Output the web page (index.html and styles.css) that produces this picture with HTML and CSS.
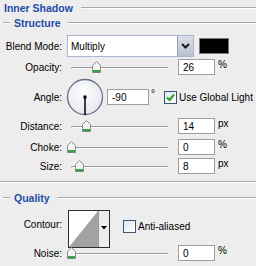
FILE: index.html
```html
<!DOCTYPE html>
<html lang="en">
<head>
  <meta charset="UTF-8" />
  <title>Inner Shadow</title>
  <link rel="stylesheet" href="styles.css">
</head>
<body>
  <div class="panel">
    <div class="panel-title">Inner Shadow</div>
    <div class="group-title">Structure</div>

    <div class="row row-blend">
      <label class="lbl">Blend Mode:</label>
      <div class="select">
        <span class="select-text">Multiply</span>
        <span class="select-btn">
          <svg width="9" height="6" viewBox="0 0 9 6"><path d="M1 1 L4.5 4.5 L8 1" fill="none" stroke="#1b1b1b" stroke-width="2"/></svg>
        </span>
      </div>
      <div class="swatch"></div>
    </div>

    <div class="row row-opacity">
      <label class="lbl">Opacity:</label>
      <div class="slider">
        <span class="thumb" style="left:21px"><svg width="9" height="12" viewBox="0 0 9 12"><path d="M0.5 4.5 L4.5 0.5 L8.5 4.5 V11.5 H0.5 Z" fill="#f2f2f2" stroke="#8c8c8c"/><rect x="1" y="9" width="7" height="2.5" fill="#3a9f4a"/></svg></span>
      </div>
      <input class="num" type="text" value="26">
      <span class="unit">%</span>
    </div>

    <div class="row row-angle">
      <label class="lbl">Angle:</label>
      <svg class="dial" width="38" height="38" viewBox="0 0 38 38">
        <defs>
          <radialGradient id="dialFill" cx="0.45" cy="0.4" r="0.6">
            <stop offset="0" stop-color="#ffffff"/>
            <stop offset="1" stop-color="#e6e8ee"/>
          </radialGradient>
        </defs>
        <circle cx="19" cy="19" r="17.5" fill="url(#dialFill)" stroke="#68708a" stroke-width="1.3"/>
        <line x1="19" y1="19" x2="19" y2="37" stroke="#000" stroke-width="1.5"/>
        <rect x="17.5" y="17.5" width="3" height="3" fill="#000"/>
      </svg>
      <input class="num num-angle" type="text" value="-90">
      <span class="deg">°</span>
      <span class="check check-on">
        <svg width="13" height="13" viewBox="0 0 13 13"><path d="M3 6.5 L5.5 9 L10 3.5" fill="none" stroke="#22a02a" stroke-width="2"/></svg>
      </span>
      <span class="check-text">Use Global Light</span>
    </div>

    <div class="row row-distance">
      <label class="lbl">Distance:</label>
      <div class="slider">
        <span class="thumb" style="left:11px"><svg width="9" height="12" viewBox="0 0 9 12"><path d="M0.5 4.5 L4.5 0.5 L8.5 4.5 V11.5 H0.5 Z" fill="#f2f2f2" stroke="#8c8c8c"/><rect x="1" y="9" width="7" height="2.5" fill="#3a9f4a"/></svg></span>
      </div>
      <input class="num" type="text" value="14">
      <span class="unit">px</span>
    </div>

    <div class="row row-choke">
      <label class="lbl">Choke:</label>
      <div class="slider">
        <span class="thumb" style="left:-4px"><svg width="9" height="12" viewBox="0 0 9 12"><path d="M0.5 4.5 L4.5 0.5 L8.5 4.5 V11.5 H0.5 Z" fill="#f2f2f2" stroke="#8c8c8c"/><rect x="1" y="9" width="7" height="2.5" fill="#3a9f4a"/></svg></span>
      </div>
      <input class="num" type="text" value="0">
      <span class="unit">%</span>
    </div>

    <div class="row row-size">
      <label class="lbl">Size:</label>
      <div class="slider">
        <span class="thumb" style="left:4px"><svg width="9" height="12" viewBox="0 0 9 12"><path d="M0.5 4.5 L4.5 0.5 L8.5 4.5 V11.5 H0.5 Z" fill="#f2f2f2" stroke="#8c8c8c"/><rect x="1" y="9" width="7" height="2.5" fill="#3a9f4a"/></svg></span>
      </div>
      <input class="num" type="text" value="8">
      <span class="unit">px</span>
    </div>

    <div class="separator"></div>

    <div class="group-title group-quality">Quality</div>

    <div class="row row-contour">
      <label class="lbl">Contour:</label>
      <svg class="contour" width="42" height="38" viewBox="0 0 42 38">
        <rect x="0.5" y="0.5" width="41" height="37" fill="#fff" stroke="#2e2e2e"/>
        <polygon points="1,37 30,1 30,37" fill="#a2a2a2"/>
        <rect x="30" y="1" width="11" height="36" fill="#ededed"/>
        <line x1="30.5" y1="1" x2="30.5" y2="37" stroke="#9a9a9a"/>
        <polygon points="33,16 39,16 36,19.5" fill="#000"/>
      </svg>
      <span class="check check-off"></span>
      <span class="check-text">Anti-aliased</span>
    </div>

    <div class="row row-noise">
      <label class="lbl">Noise:</label>
      <div class="slider">
        <span class="thumb" style="left:-4px"><svg width="9" height="12" viewBox="0 0 9 12"><path d="M0.5 4.5 L4.5 0.5 L8.5 4.5 V11.5 H0.5 Z" fill="#f2f2f2" stroke="#8c8c8c"/><rect x="1" y="9" width="7" height="2.5" fill="#3a9f4a"/></svg></span>
      </div>
      <input class="num" type="text" value="0">
      <span class="unit">%</span>
    </div>
  </div>
</body>
</html>
```

FILE: styles.css
```css
body {
  margin: 0;
  background: #ededed;
  font-family: "Liberation Sans", Arial, sans-serif;
  font-size: 10px;
  color: #000;
  width: 256px;
  height: 266px;
  overflow: hidden;
}

.panel-title,
.group-title {
  display: flex;
  align-items: center;
  font-weight: bold;
  font-size: 10.5px;
  color: #1d4ca6;
}

.panel-title {
  height: 15px;
  padding-left: 4px;
}

.panel-title::after,
.group-title::after,
.group-title::before {
  content: "";
  border-top: 1px solid #a9a9a9;
  border-bottom: 1px solid #fff;
}

.panel-title::after {
  flex: 1;
  margin-left: 8px;
}

.group-title {
  height: 16px;
}

.group-title::before {
  width: 7px;
  margin: 0 4px 0 3px;
}

.group-title::after {
  flex: 1;
  margin-left: 7px;
}

.row {
  display: flex;
  align-items: center;
}

.lbl {
  flex: none;
  width: 62px;
  text-align: right;
}

/* blend mode */
.row-blend {
  margin-top: 4px;
  height: 22px;
}

.select {
  margin-left: 5px;
  width: 127px;
  height: 22px;
  box-sizing: border-box;
  border: 1px solid #a9b7cd;
  background: #fff;
  display: flex;
  align-items: center;
}

.select-text {
  flex: 1;
  padding-left: 3px;
}

.select-btn {
  width: 15px;
  height: 20px;
  display: flex;
  align-items: center;
  justify-content: center;
  background: linear-gradient(#dadee8, #b8c0d0);
  border-left: 1px solid #8e9ab0;
}

.swatch {
  margin-left: 5px;
  width: 30px;
  height: 16px;
  box-sizing: border-box;
  background: #000;
  border: 1px solid #7a7a7a;
}

/* sliders */
.slider {
  position: relative;
  flex: none;
  margin-left: 9px;
  width: 97px;
  height: 12px;
}

.slider::before {
  content: "";
  position: absolute;
  left: 0;
  right: 0;
  top: 6px;
  border-top: 1px solid #9a9a9a;
  border-bottom: 1px solid #fff;
  border-left: 1px solid #9a9a9a;
  border-radius: 2px 0 0 2px;
}

.thumb {
  position: absolute;
  top: 0;
  width: 9px;
  height: 12px;
}

.thumb svg {
  display: block;
}

.num {
  flex: none;
  margin: 0 0 0 10px;
  width: 37px;
  height: 16px;
  box-sizing: border-box;
  border: 1px solid #9e9e9e;
  background: #fff;
  padding: 0 0 0 4px;
  font: inherit;
  color: #000;
  outline: none;
}

.unit {
  align-self: flex-start;
  margin-left: 3px;
  line-height: 12px;
}

.row-opacity {
  margin-top: 2px;
  height: 16px;
}

/* angle */
.row-angle {
  margin-top: 3px;
  height: 38px;
}

.dial {
  flex: none;
  margin-left: 4px;
}

.num-angle {
  margin-left: 3px;
  width: 42px;
}

.deg {
  align-self: flex-start;
  margin: 10px 0 0 2px;
  line-height: 12px;
}

.check {
  flex: none;
  width: 13px;
  height: 13px;
  box-sizing: border-box;
  border: 1px solid #3d5670;
  background: linear-gradient(135deg, #dde6ef, #fff);
  display: flex;
  align-items: center;
  justify-content: center;
}

.check svg {
  display: block;
  margin: -1px;
}

.check-on {
  margin-left: 9px;
}

.check-text {
  margin-left: 2px;
  white-space: nowrap;
}

.row-distance {
  margin-top: 2px;
  height: 16px;
}

.row-choke {
  margin-top: 5px;
  height: 16px;
}

.row-size {
  margin-top: 3px;
  height: 16px;
}

.separator {
  margin-top: 7px;
  border-top: 1px solid #a9a9a9;
  border-bottom: 1px solid #fff;
}

.group-quality {
  margin-top: 7px;
}

/* contour */
.row-contour {
  margin-top: 4px;
  height: 38px;
  align-items: flex-start;
}

.row-contour .lbl {
  margin-top: 9px;
  line-height: 12px;
}

.contour {
  flex: none;
  margin-left: 6px;
}

.check-off {
  margin: 10px 0 0 13px;
}

.row-contour .check-text {
  margin-top: 10px;
  line-height: 13px;
}

.row-noise {
  margin-top: -3px;
  height: 16px;
}
```
